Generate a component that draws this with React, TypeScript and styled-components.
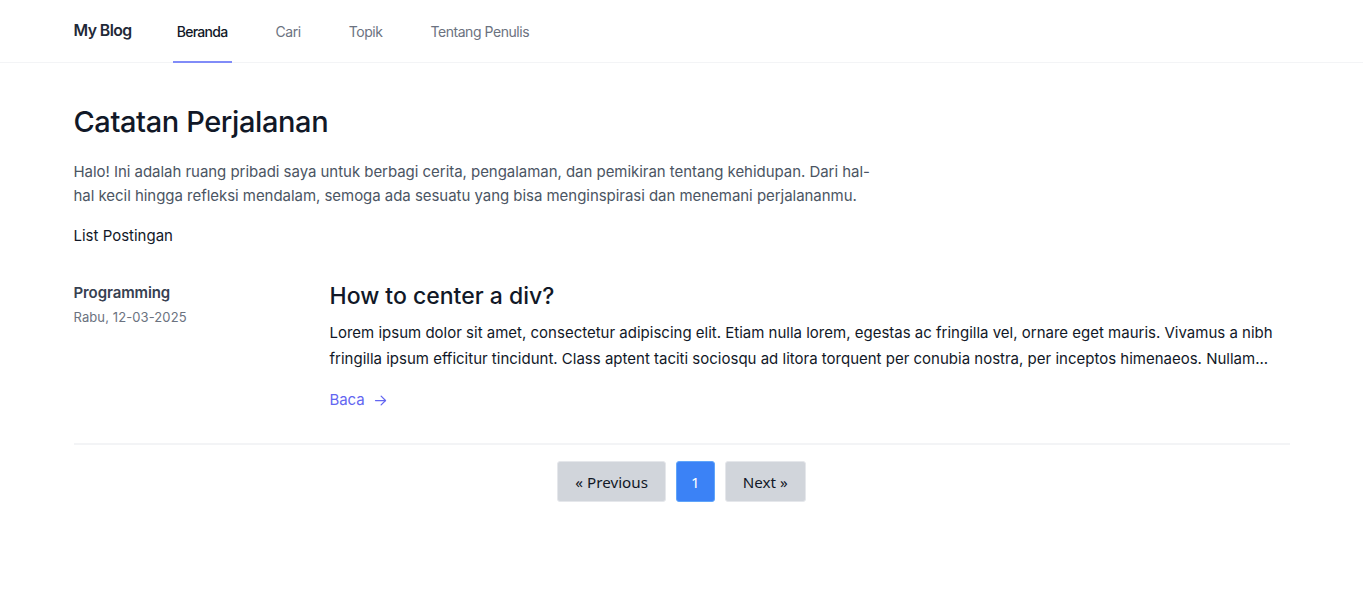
import React from "react";
import styled, { createGlobalStyle } from "styled-components";

const Global = createGlobalStyle`
  html, body { margin: 0; padding: 0; background: #ffffff; }
  body { font-family: Inter, "Noto Sans", sans-serif; color: #111827; -webkit-font-smoothing: antialiased; }
  * { box-sizing: border-box; }
`;

const Page = styled.div`
  display: flex;
  flex-direction: column;
`;

const Header = styled.header`
  height: 63px;
  border-bottom: 1px solid #f3f4f6;
`;

const HeaderInner = styled.nav`
  max-width: 1216px;
  margin: 0 auto;
  height: 100%;
  display: flex;
  align-items: stretch;
`;

const Brand = styled.a`
  display: flex;
  align-items: center;
  font-size: 15.8px;
  font-weight: 600;
  color: #1f2937;
  letter-spacing: -0.55px;
  margin-right: 41px;
  padding-bottom: 1px;
`;

const NavList = styled.div`
  display: flex;
  gap: 40px;
`;

const NavItem = styled.a<{ $active?: boolean }>`
  display: flex;
  align-items: center;
  padding: 1px 4px 0;
  font-size: 14px;
  font-weight: ${(p) => (p.$active ? 500 : 400)};
  color: ${(p) => (p.$active ? "#111827" : "#6b7280")};
  letter-spacing: ${(p) => (p.$active ? "-0.7px" : "-0.45px")};
  border-bottom: 2px solid ${(p) => (p.$active ? "#818cf8" : "transparent")};
  margin-bottom: -1px;
`;

const Main = styled.main`
  max-width: 1216px;
  width: 100%;
  margin: 0 auto;
  padding-top: 40px;
`;

const Title = styled.h1`
  margin: 0;
  font-size: 29px;
  line-height: 38px;
  font-weight: 500;
  color: #111827;
  letter-spacing: -0.4px;
`;

const Intro = styled.p`
  margin: 19px 0 0;
  max-width: 806px;
  font-size: 15px;
  line-height: 24px;
  color: #4b5563;
  letter-spacing: -0.04px;
`;

const ListLabel = styled.p`
  margin: 16px 0 0;
  font-size: 15px;
  line-height: 24px;
  color: #111827;
  letter-spacing: 0;
`;

const PostRow = styled.article`
  display: grid;
  grid-template-columns: 256px 1fr;
  padding: 34px 0 31px;
  border-bottom: 2px solid #f3f4f6;
`;

const Meta = styled.div`
  display: flex;
  flex-direction: column;
  gap: 3px;
`;

const Category = styled.span`
  font-size: 15px;
  line-height: 22px;
  font-weight: 600;
  color: #374151;
  letter-spacing: -0.1px;
`;

const DateText = styled.span`
  font-size: 13px;
  line-height: 20px;
  color: #6b7280;
  letter-spacing: 0.1px;
`;

const PostBody = styled.div`
  display: flex;
  flex-direction: column;
`;

const PostTitle = styled.h2`
  margin: 0;
  font-size: 23px;
  line-height: 28px;
  font-weight: 500;
  color: #111827;
  letter-spacing: 0;
`;

const Excerpt = styled.p`
  margin: 10px 0 0;
  font-size: 15px;
  line-height: 26px;
  color: #111827;
  letter-spacing: 0;
`;

const ReadLink = styled.a`
  margin-top: 16px;
  display: inline-flex;
  align-items: center;
  gap: 9px;
  font-size: 15px;
  line-height: 24px;
  color: #6366f1;
  letter-spacing: -0.1px;
  align-self: flex-start;
`;

const Pager = styled.div`
  display: flex;
  justify-content: center;
  gap: 10px;
  padding-top: 16px;
`;

const PageButton = styled.button<{ $active?: boolean }>`
  height: 41px;
  padding: 0 ${(p) => (p.$active ? "14px" : "17px")};
  border: 1px solid ${(p) => (p.$active ? "#60a5fa" : "#e5e7eb")};
  border-radius: 3px;
  background: ${(p) => (p.$active ? "#3b82f6" : "#d1d5db")};
  color: ${(p) => (p.$active ? "#ffffff" : "#111827")};
  font-family: "Noto Sans", Inter, sans-serif;
  font-size: 15.2px;
`;

const Arrow = () => (
  <svg width="15" height="15" viewBox="0 0 24 24" fill="none" stroke="currentColor" strokeWidth="2" strokeLinecap="round" strokeLinejoin="round">
    <path d="M4 12h16" />
    <path d="M13 5l7 7-7 7" />
  </svg>
);

export default function App() {
  return (
    <Page>
      <Global />
      <Header>
        <HeaderInner>
          <Brand>My Blog</Brand>
          <NavList>
            <NavItem $active>Beranda</NavItem>
            <NavItem>Cari</NavItem>
            <NavItem>Topik</NavItem>
            <NavItem>Tentang Penulis</NavItem>
          </NavList>
        </HeaderInner>
      </Header>
      <Main>
        <Title>Catatan Perjalanan</Title>
        <Intro>
          Halo! Ini adalah ruang pribadi saya untuk berbagi cerita, pengalaman, dan pemikiran tentang kehidupan. Dari hal-hal kecil hingga refleksi mendalam, semoga ada sesuatu yang bisa menginspirasi dan menemani perjalananmu.
        </Intro>
        <ListLabel>List Postingan</ListLabel>
        <PostRow>
          <Meta>
            <Category>Programming</Category>
            <DateText>Rabu, 12-03-2025</DateText>
          </Meta>
          <PostBody>
            <PostTitle>How to center a div?</PostTitle>
            <Excerpt>
              Lorem ipsum dolor sit amet, consectetur adipiscing elit. Etiam nulla lorem, egestas ac fringilla vel, ornare eget mauris. Vivamus a nibh fringilla ipsum efficitur tincidunt. Class aptent taciti sociosqu ad litora torquent per conubia nostra, per inceptos himenaeos. Nullam...
            </Excerpt>
            <ReadLink>
              Baca <Arrow />
            </ReadLink>
          </PostBody>
        </PostRow>
        <Pager>
          <PageButton>« Previous</PageButton>
          <PageButton $active>1</PageButton>
          <PageButton>Next »</PageButton>
        </Pager>
      </Main>
    </Page>
  );
}
